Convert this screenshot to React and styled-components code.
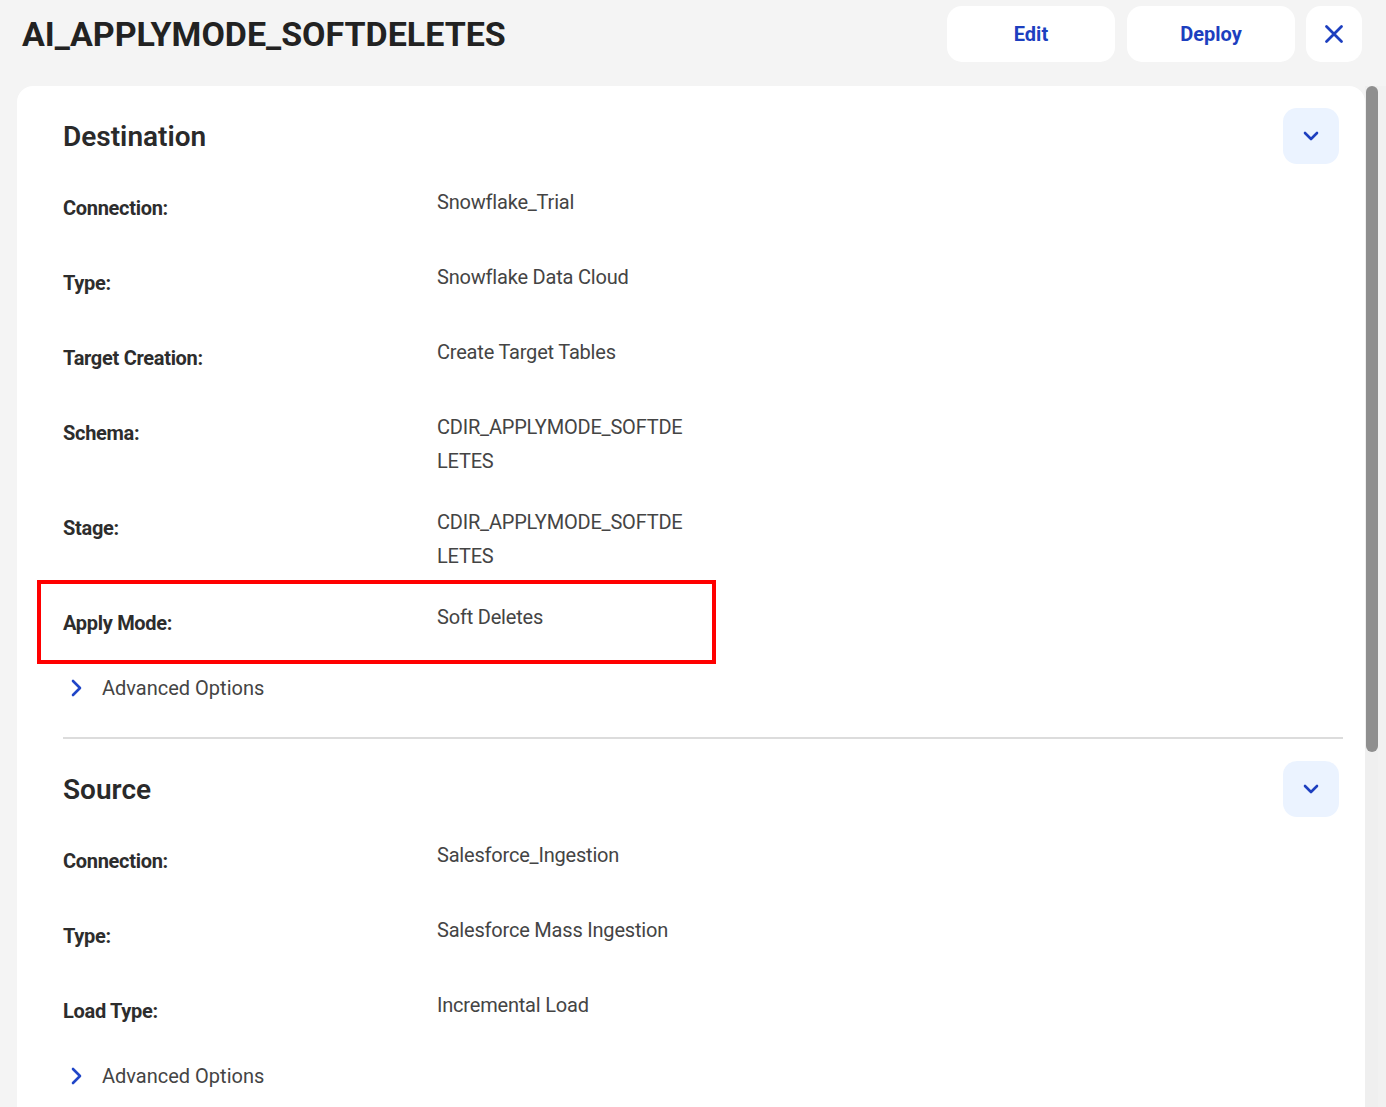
import React from "react";
import styled, { createGlobalStyle } from "styled-components";

const GlobalStyle = createGlobalStyle`
  html, body {
    margin: 0;
    padding: 0;
    background: #f4f4f4;
    overflow: hidden;
  }
  body {
    font-family: Roboto, "Liberation Sans", Arial, sans-serif;
  }
`;

const destination = [
  { label: "Connection:", value: ["Snowflake_Trial"] },
  { label: "Type:", value: ["Snowflake Data Cloud"] },
  { label: "Target Creation:", value: ["Create Target Tables"] },
  { label: "Schema:", value: ["CDIR_APPLYMODE_SOFTDE", "LETES"] },
  { label: "Stage:", value: ["CDIR_APPLYMODE_SOFTDE", "LETES"] },
  { label: "Apply Mode:", value: ["Soft Deletes"], marked: true },
];

const source = [
  { label: "Connection:", value: ["Salesforce_Ingestion"] },
  { label: "Type:", value: ["Salesforce Mass Ingestion"] },
  { label: "Load Type:", value: ["Incremental Load"] },
];

const ChevronDown = () => (
  <svg width="20" height="20" viewBox="0 0 20 20" fill="none">
    <path d="M4 7l6 6 6-6" stroke="#1d3fbf" strokeWidth="2.6" strokeLinecap="round" strokeLinejoin="round" />
  </svg>
);

const ChevronRight = () => (
  <svg width="14" height="20" viewBox="0 0 14 20" fill="none">
    <path d="M4 3l7 7-7 7" stroke="#2046c8" strokeWidth="2.6" strokeLinecap="round" strokeLinejoin="round" />
  </svg>
);

const CloseIcon = () => (
  <svg width="20" height="20" viewBox="0 0 20 20" fill="none">
    <path d="M2.5 2.5l15 15M17.5 2.5l-15 15" stroke="#1d3fbf" strokeWidth="2.8" strokeLinecap="round" />
  </svg>
);

const Section = ({ title, rows, divider }) => (
  <SectionBox $divider={divider}>
    <SectionHead>
      <SectionTitle>{title}</SectionTitle>
      <CollapseButton>
        <ChevronDown />
      </CollapseButton>
    </SectionHead>
    {rows.map((r) => (
      <Row key={r.label} $marked={r.marked} $lines={r.value.length}>
        <Label>{r.label}</Label>
        <Value>
          {r.value.map((v) => (
            <div key={v}>{v}</div>
          ))}
        </Value>
      </Row>
    ))}
    <Advanced>
      <ChevronRight />
      <span>Advanced Options</span>
    </Advanced>
  </SectionBox>
);

const App = () => {
  return (
    <Screen>
      <GlobalStyle />
      <Header>
        <Title>AI_APPLYMODE_SOFTDELETES</Title>
        <Actions>
          <ActionButton>Edit</ActionButton>
          <ActionButton>Deploy</ActionButton>
          <IconButton>
            <CloseIcon />
          </IconButton>
        </Actions>
      </Header>
      <Body>
        <Card>
          <Section title="Destination" rows={destination} divider />
          <Section title="Source" rows={source} />
        </Card>
        <ScrollRail>
          <ScrollThumb />
        </ScrollRail>
      </Body>
    </Screen>
  );
};

export default App;

const Screen = styled.div`
  width: 1386px;
  height: 1107px;
  display: flex;
  flex-direction: column;
  background: #f4f4f4;
`;

const Header = styled.div`
  height: 86px;
  flex-shrink: 0;
  display: flex;
  align-items: flex-start;
  justify-content: space-between;
  padding: 0 24px 0 22px;
  box-sizing: border-box;
`;

const Title = styled.h1`
  margin: 12px 0 0;
  font-size: 34px;
  font-weight: 700;
  line-height: 44px;
  color: #222;
`;

const Actions = styled.div`
  display: flex;
  gap: 12px;
  margin-top: 6px;
`;

const ActionButton = styled.button`
  width: 168px;
  height: 56px;
  border: none;
  border-radius: 15px;
  background: #fff;
  color: #1d3fbf;
  font-family: Roboto, "Liberation Sans", sans-serif;
  font-size: 20px;
  font-weight: 700;
  cursor: pointer;
`;

const IconButton = styled(ActionButton)`
  width: 56px;
  display: flex;
  align-items: center;
  justify-content: center;
  margin-left: -1px;
`;

const Body = styled.div`
  flex: 1;
  min-height: 0;
  display: flex;
  padding-left: 17px;
`;

const Card = styled.div`
  flex: 1;
  overflow: hidden;
  background: #fff;
  border-radius: 16px 16px 0 0;
  padding: 22px 22px 0 46px;
  box-sizing: border-box;
`;

const ScrollRail = styled.div`
  width: 21px;
  flex-shrink: 0;
  display: flex;
  flex-direction: column;
  background: linear-gradient(to right, #efefef 0 13px, #f1f1f1 13px);
`;

const ScrollThumb = styled.div`
  width: 12px;
  height: 666px;
  margin-left: 1px;
  border-radius: 6px;
  background: #8f8f8f;
`;

const SectionBox = styled.section`
  padding-bottom: ${(p) => (p.$divider ? "32px" : "0")};
  margin-bottom: ${(p) => (p.$divider ? "22px" : "0")};
  border-bottom: ${(p) => (p.$divider ? "2px solid #dcdcdc" : "none")};
`;

const SectionHead = styled.div`
  display: flex;
  align-items: center;
  justify-content: space-between;
  height: 56px;
  margin-bottom: 21px;
`;

const SectionTitle = styled.h2`
  margin: 0;
  font-size: 28px;
  font-weight: 600;
  color: #2a2a2a;
`;

const CollapseButton = styled.button`
  width: 56px;
  height: 56px;
  margin-right: 4px;
  border: none;
  border-radius: 14px;
  background: #ebf3ff;
  display: flex;
  align-items: center;
  justify-content: center;
  cursor: pointer;
`;

const Row = styled.div`
  position: relative;
  display: grid;
  grid-template-columns: 374px 1fr;
  height: ${(p) => (p.$lines > 1 ? "95px" : "75px")};
  box-sizing: border-box;

  &::after {
    content: "";
    display: ${(p) => (p.$marked ? "block" : "none")};
    position: absolute;
    top: -20px;
    left: -26px;
    width: 679px;
    height: 84px;
    border: 4px solid #ff0000;
    box-sizing: border-box;
    pointer-events: none;
  }
`;

const Label = styled.div`
  padding-top: 6px;
  font-size: 20px;
  line-height: 34px;
  font-weight: 700;
  color: #2d2d2d;
  letter-spacing: -0.3px;
`;

const Value = styled.div`
  font-size: 20px;
  line-height: 34px;
  color: #444;
  letter-spacing: -0.2px;
`;

const Advanced = styled.div`
  display: flex;
  align-items: center;
  gap: 19px;
  height: 34px;
  margin-top: -4px;
  padding-left: 6px;
  font-size: 20px;
  color: #444;
  cursor: pointer;
`;
